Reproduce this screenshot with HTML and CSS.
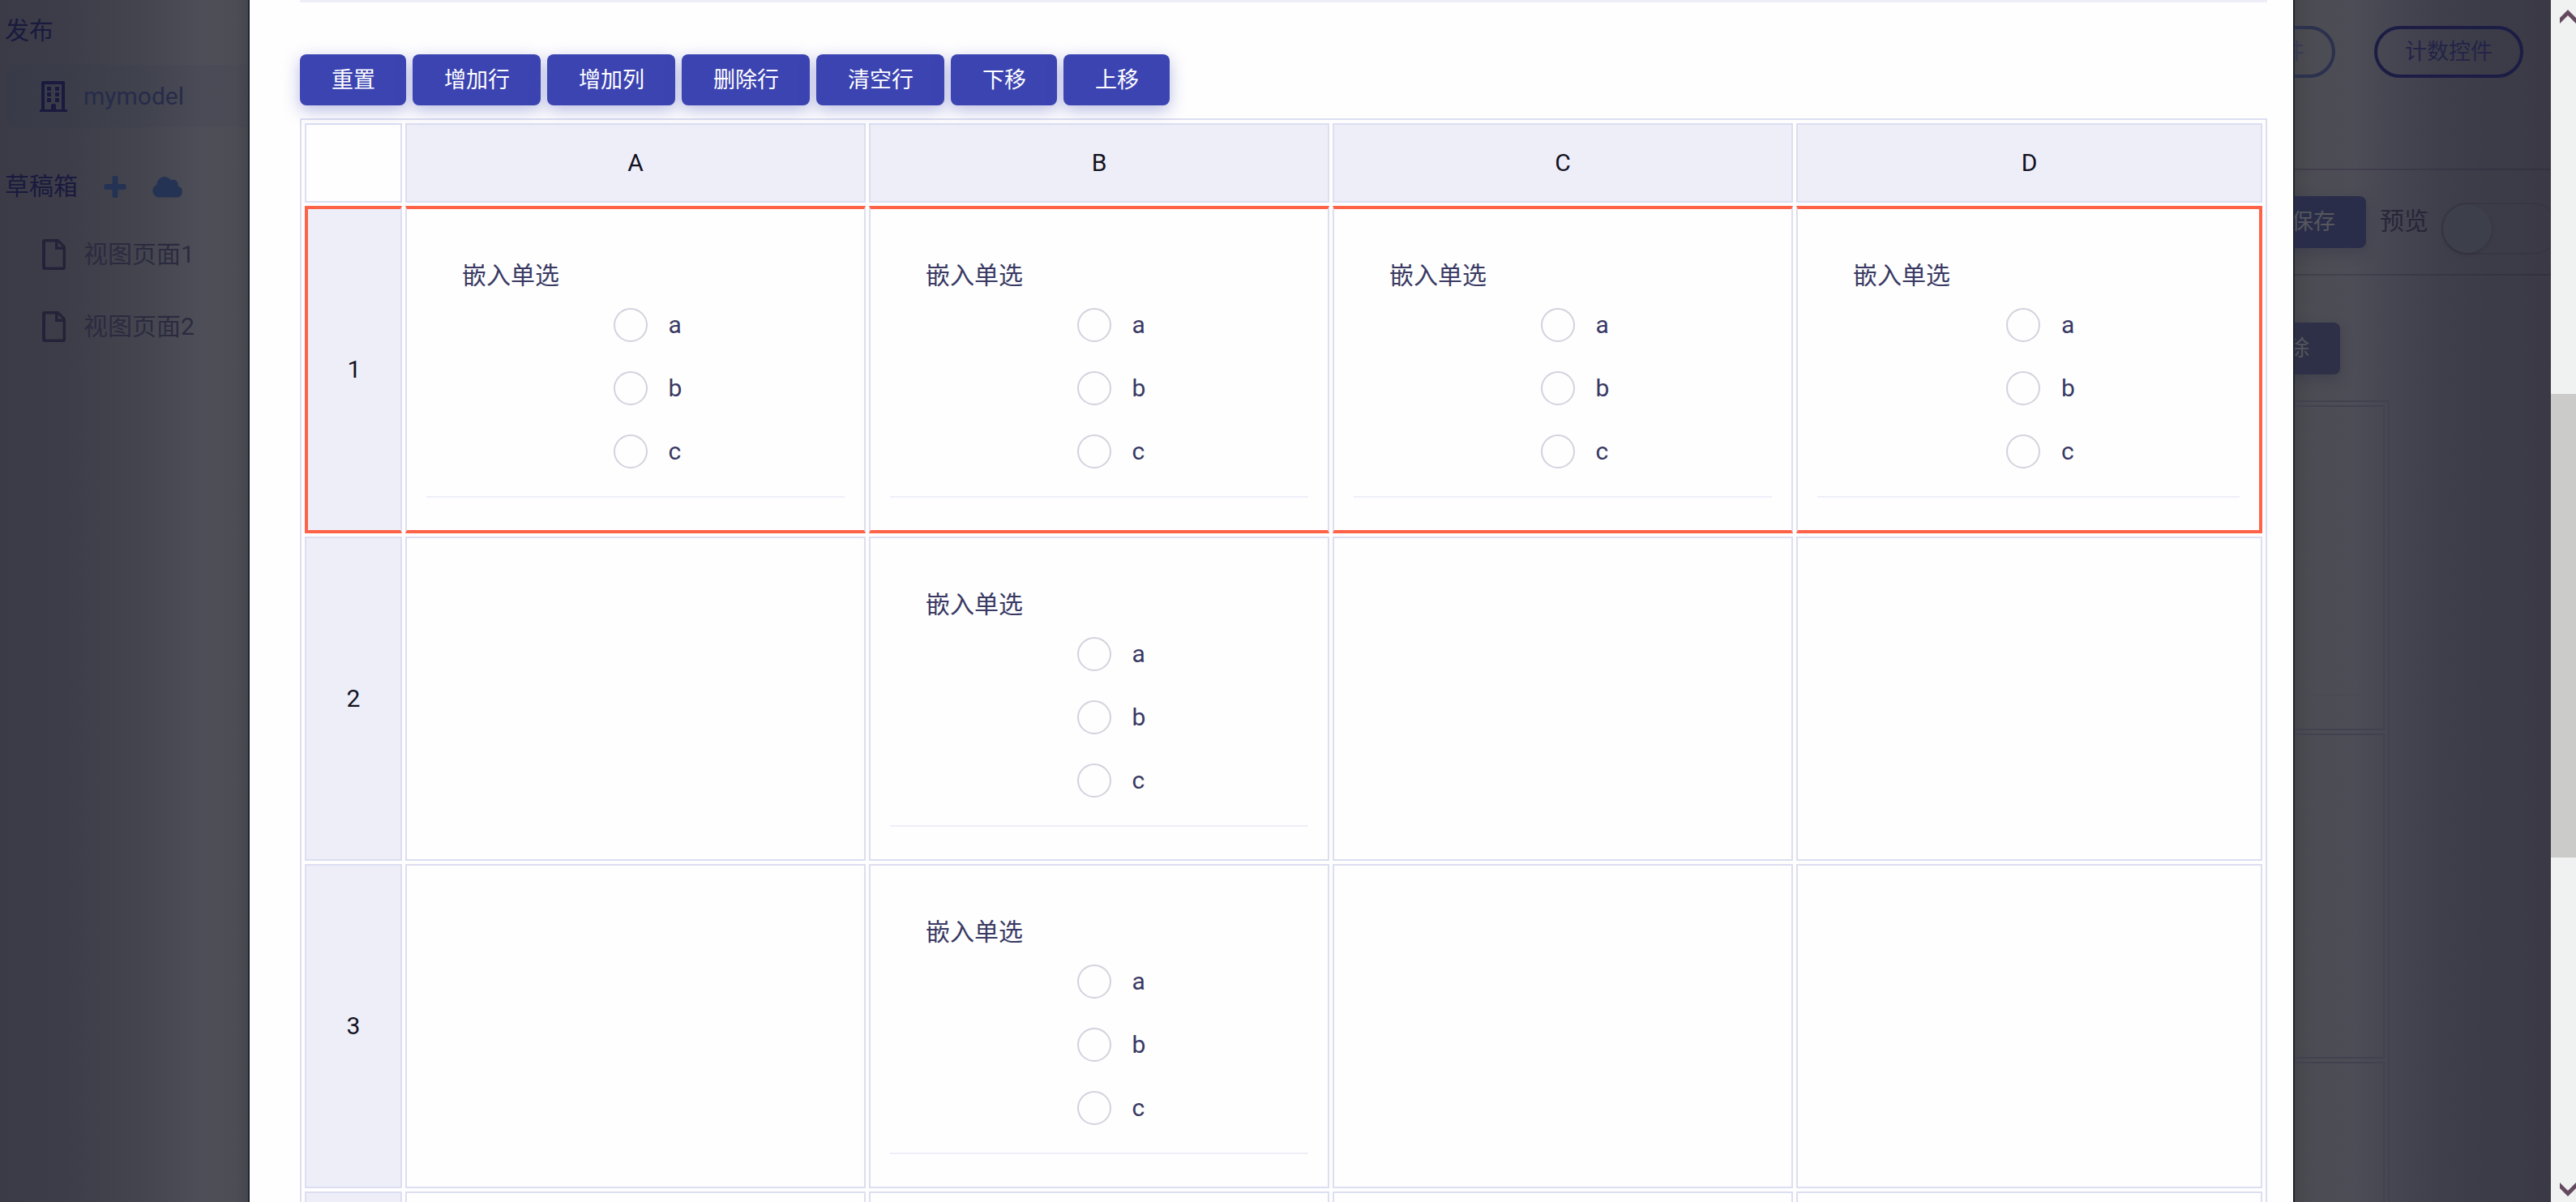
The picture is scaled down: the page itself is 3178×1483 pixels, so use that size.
FILE: index.html
```html
<!DOCTYPE html>
<html lang="zh-CN">
<head>
<meta charset="utf-8">
<title>mymodel</title>
<link rel="stylesheet" href="styles.css">
</head>
<body>
<div class="app">
  <nav class="sidebar">
    <h2 class="side-title">发布</h2>
    <a class="side-item active" href="#">
      <svg class="side-icon" viewBox="0 0 34 38" aria-hidden="true"><path fill-rule="evenodd" d="M5 0h24q2 0 2 2v33h3v3H0v-3h2V2q0-2 3-2zM6 4v31h8v-5q0-2 3-2t3 2v5h7V4z"/><path d="M9 7h5v5H9zM19 7h5v5h-5zM9 14h5v5H9zM19 14h5v5h-5zM9 21h5v5H9zM19 21h5v5h-5z"/></svg>
      <span>mymodel</span>
    </a>
    <div class="side-head">
      <h2 class="side-title">草稿箱</h2>
      <button class="icon-button" type="button" aria-label="新增"><svg class="plus" viewBox="0 0 27 27"><path d="M12 0h3q2 0 2 2v8h8q2 0 2 2v3q0 2-2 2h-8v8q0 2-2 2h-3q-2 0-2-2v-8H2q-2 0-2-2v-3q0-2 2-2h8V2q0-2 2-2z"/></svg></button>
      <button class="icon-button" type="button" aria-label="云端"><svg class="cloud" viewBox="0 0 38 26"><path d="M8 26a8 8 0 0 1-2.500-15.500A9.500 9.500 0 0 1 23 5a6 6 0 0 1 8.500 7A7.200 7.200 0 0 1 31 26z"/></svg></button>
    </div>
    <a class="side-item" href="#">
      <svg class="side-icon file" viewBox="0 0 34 38" aria-hidden="true"><path fill-rule="evenodd" d="M6 0h17l9 9v26q0 3-3 3H6q-3 0-3-3V3q0-3 3-3zm1 3.500v31h21.500V13H19V3.500zM22.500 4v5.500H28z"/></svg>
      <span>视图页面1</span>
    </a>
    <a class="side-item" href="#">
      <svg class="side-icon file" viewBox="0 0 34 38" aria-hidden="true"><path fill-rule="evenodd" d="M6 0h17l9 9v26q0 3-3 3H6q-3 0-3-3V3q0-3 3-3zm1 3.500v31h21.500V13H19V3.500zM22.500 4v5.500H28z"/></svg>
      <span>视图页面2</span>
    </a>
  </nav>

  <main class="dialog" role="dialog" aria-label="嵌入单选">
    <div class="toolbar">
      <button class="btn" type="button">重置</button>
      <button class="btn" type="button">增加行</button>
      <button class="btn" type="button">增加列</button>
      <button class="btn" type="button">删除行</button>
      <button class="btn" type="button">清空行</button>
      <button class="btn" type="button">下移</button>
      <button class="btn" type="button">上移</button>
    </div>
    <table class="sheet">
      <colgroup><col class="col-index"><col class="col-data"><col class="col-data"><col class="col-data"><col></colgroup>
      <thead>
        <tr><td></td><th scope="col">A</th><th scope="col">B</th><th scope="col">C</th><th scope="col">D</th></tr>
      </thead>
      <tbody>
        <tr class="selected">
          <th scope="row">1</th>
          <td><fieldset class="field"><legend>嵌入单选</legend><div class="options"><label><input type="radio" name="a1">a</label><label><input type="radio" name="a1">b</label><label><input type="radio" name="a1">c</label></div></fieldset></td>
          <td><fieldset class="field"><legend>嵌入单选</legend><div class="options"><label><input type="radio" name="b1">a</label><label><input type="radio" name="b1">b</label><label><input type="radio" name="b1">c</label></div></fieldset></td>
          <td><fieldset class="field"><legend>嵌入单选</legend><div class="options"><label><input type="radio" name="c1">a</label><label><input type="radio" name="c1">b</label><label><input type="radio" name="c1">c</label></div></fieldset></td>
          <td><fieldset class="field"><legend>嵌入单选</legend><div class="options"><label><input type="radio" name="d1">a</label><label><input type="radio" name="d1">b</label><label><input type="radio" name="d1">c</label></div></fieldset></td>
        </tr>
        <tr>
          <th scope="row">2</th>
          <td></td>
          <td><fieldset class="field"><legend>嵌入单选</legend><div class="options"><label><input type="radio" name="b2">a</label><label><input type="radio" name="b2">b</label><label><input type="radio" name="b2">c</label></div></fieldset></td>
          <td></td>
          <td></td>
        </tr>
        <tr>
          <th scope="row">3</th>
          <td></td>
          <td><fieldset class="field"><legend>嵌入单选</legend><div class="options"><label><input type="radio" name="b3">a</label><label><input type="radio" name="b3">b</label><label><input type="radio" name="b3">c</label></div></fieldset></td>
          <td></td>
          <td></td>
        </tr>
        <tr><th scope="row"></th><td></td><td></td><td></td><td></td></tr>
      </tbody>
    </table>
  </main>

  <section class="workspace">
    <div class="widgets">
      <button class="pill faded" type="button">件</button>
      <button class="pill" type="button">计数控件</button>
    </div>
    <div class="actions">
      <button class="dim-btn" type="button">保存</button>
      <label class="preview">预览<input class="switch" type="checkbox"></label>
    </div>
    <div class="edit-bar">
      <button class="dim-btn pale" type="button">除</button>
    </div>
    <div class="canvas">
      <div class="canvas-cell"><hr></div>
      <div class="canvas-cell"></div>
      <div class="canvas-cell"></div>
    </div>
  </section>

  <div class="scrollbar" aria-hidden="true">
    <svg class="arrow" viewBox="0 0 20 17"><path d="M0 10 10 0l10 10v7L10 7 0 17z"/></svg>
    <div class="track"><div class="track-before"></div><div class="thumb"></div><div class="track-after"></div></div>
    <svg class="arrow" viewBox="0 0 20 17"><path d="M0 7l10 10L20 7V0L10 10 0 0z"/></svg>
  </div>
</div>
</body>
</html>
```
FILE: styles.css
```css
* { box-sizing: border-box; }

body {
  margin: 0;
  font: 30px/44px Roboto, "Noto Sans CJK SC", sans-serif;
  color: #393963;
}

button, input { font: inherit; margin: 0; }
h2 { margin: 0; font: inherit; }

.app {
  display: flex;
  height: 100vh;
  overflow: hidden;
  background: #3b3b47;
}

/* dimmed sidebar */
.sidebar {
  flex: 0 0 306px;
  padding: 16px 0 0 6px;
  overflow: hidden;
  white-space: nowrap;
  background: linear-gradient(90deg, #3b3b47 0, #3d3d49 80px, #45454f 180px, #4e4e58 250px, #4d4d56 290px, #45454c 306px);
}
.side-title { color: #191a3e; }
.side-item {
  display: flex;
  align-items: center;
  gap: 20px;
  height: 77px;
  margin-bottom: 12px;
  padding-left: 43px;
  border-radius: 10px 0 0 10px;
  color: #2b2b40;
  text-decoration: none;
}
.side-item.active {
  margin: 20px 0 50px;
  color: #262c4a;
  background: linear-gradient(90deg, rgba(50, 58, 72, .3), rgba(50, 58, 72, .12));
}
.side-icon { width: 34px; height: 38px; fill: #191a3e; }
.side-icon.file { fill: #222338; }
.side-head { display: flex; align-items: center; gap: 32px; height: 46px; margin-bottom: 22px; }
.icon-button { display: flex; padding: 0; border: 0; background: none; fill: #243253; }
.plus { width: 28px; height: 27px; }
.cloud { width: 38px; height: 27px; }

/* dialog */
.dialog {
  flex: 1;
  min-width: 0;
  padding: 0 32px 0 62px;
  overflow: hidden;
  border: solid #1d2231;
  border-width: 0 2px;
  background: #fefefe;
}
.toolbar {
  display: flex;
  gap: 8px;
  padding-top: 64px;
  margin-bottom: 16px;
  border-top: 3px solid #eeeef9;
}
.btn {
  height: 63px;
  padding: 0 38px 0 39px;
  border: 0;
  border-radius: 8px;
  color: #fff;
  background: #3c44b1;
  box-shadow: 0 6px 20px rgba(60, 68, 177, .36);
  font-size: 27px;
}

.sheet {
  width: 100%;
  table-layout: fixed;
  border: 2px solid #dcdef1;
  border-collapse: separate;
  border-spacing: 4px;
}
.col-index { width: 120px; }
.col-data { width: 568px; }
.sheet th, .sheet td {
  padding: 0 24px;
  border: 2px solid #dcdef1;
}
.sheet thead tr { height: 98px; }
.sheet tbody tr { height: 400px; }
.sheet th {
  color: #12121f;
  background: #eeeef9;
  font-weight: 400;
}
.sheet .selected th, .sheet .selected td { border-top: 4px solid #ff6347; border-bottom: 4px solid #ff6347; }
.sheet .selected th { border-left: 4px solid #ff6347; }
.sheet .selected td:last-child { border-right: 4px solid #ff6347; }

.field {
  display: flex;
  flex-direction: column;
  min-width: 0;
  margin: 0 0 40px;
  padding: 0 0 16px;
  border: 0;
  border-bottom: 2px solid #eeeef9;
}
.field legend { padding: 60px 0 0 44px; }
.options { display: grid; align-self: center; padding-left: 30px; }
.options label { display: flex; align-items: center; gap: 26px; height: 78px; }
.options input {
  width: 42px;
  height: 42px;
  appearance: none;
  border: 2px solid #d3d2de;
  border-radius: 50%;
}

/* dimmed workspace to the right of the dialog */
.workspace {
  flex: 0 0 316px;
  overflow: hidden;
  white-space: nowrap;
  background: linear-gradient(90deg, #46464c 0, #4c4c54 24px, #4d4d57 70px, #454551 130px, #3f3e4b 180px, #3c3c49 240px, #3b3945 316px);
}
.widgets, .actions, .edit-bar { display: flex; justify-content: flex-end; }
.widgets { gap: 48px; padding: 32px 34px 112px 0; }
.pill {
  flex: none;
  height: 64px;
  padding: 0 34px;
  border: 4px solid #1c1d44;
  border-radius: 32px;
  color: #232447;
  background: none;
  font-size: 27px;
}
.pill.faded { padding-left: 80px; border-color: #2c314d; color: #383a52; }
.actions {
  gap: 17px;
  height: 132px;
  padding-top: 32px;
  border: solid rgba(40, 34, 52, .3);
  border-width: 2px 0;
}
.dim-btn {
  flex: none;
  height: 64px;
  padding: 0 38px;
  border: 0;
  border-radius: 8px;
  color: #56575d;
  background: #2a2d49;
  box-shadow: 0 6px 16px rgba(42, 42, 66, .3);
  font-size: 27px;
}
.dim-btn.pale { background: #2d3046; }
.preview { display: flex; gap: 16px; height: 62px; margin-right: -10px; line-height: 62px; color: #262638; }
.switch {
  width: 145px;
  height: 64px;
  margin-top: 8px;
  appearance: none;
  border: 2px solid #393644;
  border-radius: 32px;
}
.switch::before {
  content: "";
  display: block;
  width: 60px;
  height: 60px;
  border-radius: 50%;
  background: #3d3f4a;
  box-shadow: 0 2px 4px rgba(40, 40, 56, .4);
}
.edit-bar { padding: 58px 260px 32px 0; }
.canvas {
  display: grid;
  gap: 4px;
  margin-right: 199px;
  padding: 4px 4px 4px 0;
  border: solid #41414f;
  border-width: 2px 2px 0 0;
}
.canvas-cell { height: 401px; border: solid #41414f; border-width: 2px 2px 2px 0; }
.canvas-cell hr { margin: 355px 26px 0 0; border: 0; border-top: 1px solid #484851; }

.scrollbar {
  flex: 0 0 31px;
  display: flex;
  flex-direction: column;
  align-items: flex-end;
  padding: 12px 0 7px;
  background: #f0f1f1;
}
.arrow { width: 20px; height: 17px; fill: #64495f; }
.track { flex: 1; display: flex; flex-direction: column; align-self: stretch; }
.track-before { flex: 457; }
.thumb { flex: 572; background: #cbcbc9; }
.track-after { flex: 401; }
```
